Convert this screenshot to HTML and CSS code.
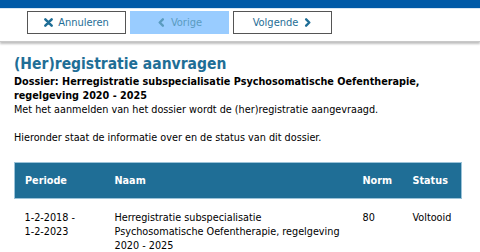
FILE: index.html
```html
<!DOCTYPE html>
<html lang="nl">
<head>
  <meta charset="UTF-8">
  <title>(Her)registratie aanvragen</title>
  <link rel="stylesheet" href="styles.css">
</head>
<body>
<div class="topbar"></div>

<div class="toolbar">
  <button class="tool-btn">
    <svg class="ico" viewBox="0 0 10 10" width="9" height="9"><path d="M1.5 1.5 L8.5 8.5 M8.5 1.5 L1.5 8.5" stroke="#1f6e96" stroke-width="2.8" stroke-linecap="round"/></svg>
    Annuleren
  </button>
  <button class="tool-btn disabled">
    <svg class="ico" viewBox="0 0 10 10" width="9" height="9"><path d="M6.5 1.5 L3 5 L6.5 8.5" fill="none" stroke="#5a9bbf" stroke-width="2.6" stroke-linecap="round" stroke-linejoin="round"/></svg>
    Vorige
  </button>
  <button class="tool-btn">
    Volgende
    <svg class="ico" viewBox="0 0 10 10" width="9" height="9"><path d="M3.5 1.5 L7 5 L3.5 8.5" fill="none" stroke="#1f6e96" stroke-width="2.6" stroke-linecap="round" stroke-linejoin="round"/></svg>
  </button>
</div>

<div class="content">
  <h1>(Her)registratie aanvragen</h1>
  <h2>Dossier: Herregistratie subspecialisatie Psychosomatische Oefentherapie, regelgeving 2020 - 2025</h2>
  <p>Met het aanmelden van het dossier wordt de (her)registratie aangevraagd.<br><br>Hieronder staat de informatie over en de status van dit dossier.</p>

  <table class="dossier">
    <colgroup>
      <col class="col-periode">
      <col class="col-naam">
      <col class="col-norm">
      <col class="col-status">
    </colgroup>
    <thead>
      <tr>
        <th>Periode</th>
        <th>Naam</th>
        <th>Norm</th>
        <th>Status</th>
      </tr>
    </thead>
    <tbody>
      <tr>
        <td>1-2-2018 -<br>1-2-2023</td>
        <td class="naam">Herregistratie subspecialisatie Psychosomatische Oefentherapie, regelgeving 2020 - 2025</td>
        <td>80</td>
        <td>Voltooid</td>
      </tr>
    </tbody>
  </table>
</div>
</body>
</html>
```

FILE: styles.css
```css
body {
  margin: 0;
  font-family: "DejaVu Sans Condensed", "DejaVu Sans", Verdana, sans-serif;
  font-size: 10.75px;
  color: #000;
  background: #fff;
}

.topbar {
  height: 8px;
  background-color: #005aa7;
  border-bottom: 1px solid #d7e6f3;
}

.toolbar {
  display: flex;
  gap: 4px;
  padding: 2px 0 7px 27px;
  height: 23px;
  box-shadow: 0 2px 2px rgba(0,0,0,0.25);
  border-bottom: 1px solid #c8c8c8;
}

.tool-btn {
  width: 99px;
  height: 23px;
  border: 1px solid #555;
  background: #fff;
  color: #1f6e96;
  font-family: inherit;
  font-size: 11px;
  display: flex;
  align-items: center;
  justify-content: center;
  gap: 5px;
  padding: 0;
}

.tool-btn.disabled {
  background: #99ccff;
  border-color: #99ccff;
  color: #5a9bbf;
}

.content {
  padding: 11px 14px 0 14px;
}

h1 {
  font-size: 15.5px;
  font-weight: bold;
  color: #1f6e96;
  margin: 0;
  line-height: 22px;
}

h2 {
  font-size: 10.75px;
  font-weight: bold;
  margin: 0;
  line-height: 14px;
}

p {
  margin: 0 0 17px 0;
  line-height: 14px;
}

.dossier {
  width: 448px;
  table-layout: fixed;
  border-collapse: collapse;
}

.col-periode { width: 90px; }
.col-naam { width: 248px; }
.col-norm { width: 50px; }

.dossier th {
  background-color: #1f6e96;
  color: #fff;
  font-weight: bold;
  text-align: left;
  height: 35px;
  padding: 0 10px;
  border-top: 1px solid #9cc3d8;
  border-bottom: 1px solid #9cc3d8;
}

.dossier th:first-child { border-left: 1px solid #9cc3d8; }
.dossier th:last-child { border-right: 1px solid #9cc3d8; }

.dossier td {
  vertical-align: top;
  padding: 12px 10px;
  line-height: 14px;
}

.dossier td.naam {
  padding-right: 2px;
}
```
